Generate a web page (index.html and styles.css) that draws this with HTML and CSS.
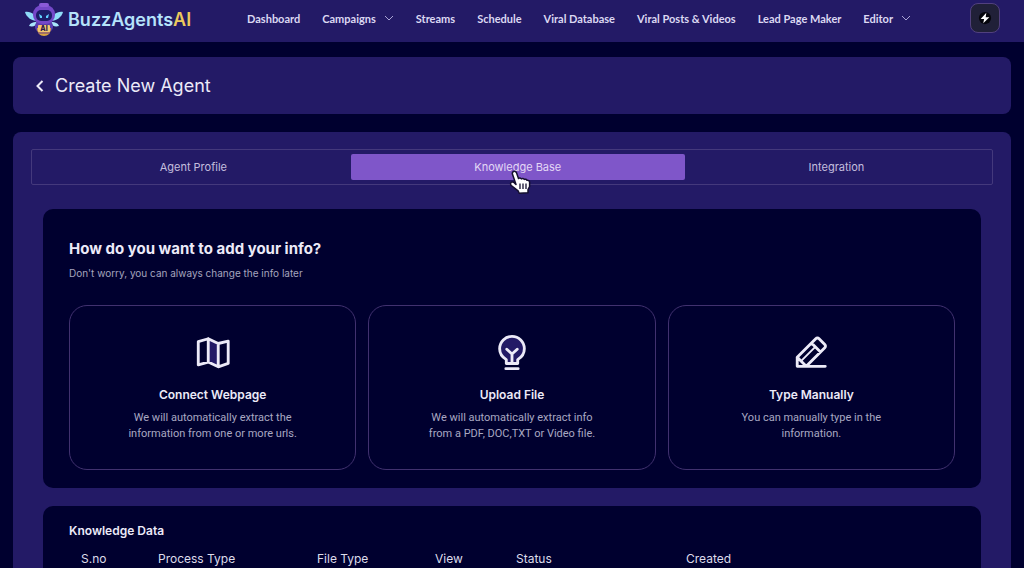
FILE: index.html
```
<!DOCTYPE html>
<html lang="en">
<head>
    <meta charset="UTF-8">
    <meta name="viewport" content="width=device-width, initial-scale=1.0">
    <title>BuzzAgentsAI - Create New Agent</title>
    <link rel="stylesheet" href="styles.css">
</head>
<body>
    <header class="navbar">
        <a class="logo" href="#">
            <svg class="logo-bot" viewBox="0 0 40 34" aria-hidden="true">
                <path d="M13 19C8 19 2 15 1 10c6-1 11 3 13 8z" fill="#8fdcf8"/>
                <path d="M27 19c5 0 11-4 12-9-6-1-11 3-13 8z" fill="#8fdcf8"/>
                <path d="M12 20c-3 0-6 1-7 4 4 1 7 0 8-3zM28 20c3 0 6 1 7 4-4 1-7 0-8-3z" fill="#a9e6fb"/>
                <rect x="11" y="19" width="18" height="11" rx="5" fill="#5a3bae"/>
                <path d="M13 26h14c0 5-3 8-7 8s-7-3-7-8z" fill="#d9a441"/>
                <path d="M14 31h12" stroke="#6a3d90"/>
                <rect x="9" y="3" width="22" height="19" rx="9" fill="#7448c8"/>
                <rect x="15" y="1" width="10" height="4" rx="2" fill="#8a5ad8"/>
                <rect x="12" y="8" width="16" height="11" rx="5" fill="#1d1c68"/>
                <path d="M15 12l3 2v2h-2zM25 12l-3 2v2h2z" fill="#5fd0ff"/>
                <rect x="14" y="23" width="12" height="7" rx="1" fill="#f3c872"/>
                <text class="logo-badge" x="20" y="29" text-anchor="middle">AI</text>
            </svg>
            <span class="logo-text">BuzzAgents<span class="logo-ai">AI</span></span>
        </a>
        <nav class="nav-links">
            <a href="#">Dashboard</a>
            <a href="#">Campaigns
                <svg class="chevron" viewBox="0 0 10 6" aria-hidden="true"><path d="M1 1l4 4 4-4"/></svg>
            </a>
            <a href="#">Streams</a>
            <a href="#">Schedule</a>
            <a href="#">Viral Database</a>
            <a href="#">Viral Posts &amp; Videos</a>
            <a href="#">Lead Page Maker</a>
            <a href="#">Editor
                <svg class="chevron" viewBox="0 0 10 6" aria-hidden="true"><path d="M1 1l4 4 4-4"/></svg>
            </a>
        </nav>
        <button class="bolt-button" type="button" aria-label="Quick actions">
            <svg viewBox="0 0 16 16" aria-hidden="true">
                <circle cx="8" cy="8" r="7" fill="#05050c"/>
                <path d="M9.500 2L3 9h4l-1 5 7-7H8.800z" fill="#fff"/>
            </svg>
        </button>
    </header>

    <main>
        <div class="page-title">
            <a class="back" href="#" aria-label="Back">
                <svg viewBox="0 0 8 12" aria-hidden="true"><path d="M6.500 1L1.500 6l5 5"/></svg>
            </a>
            <h1>Create New Agent</h1>
        </div>

        <div class="panel">
            <div class="tabs" role="tablist">
                <button class="tab" type="button" role="tab">Agent Profile</button>
                <button class="tab active" type="button" role="tab" aria-selected="true">Knowledge Base
                    <svg class="cursor" viewBox="0 0 22 24" aria-hidden="true">
                        <path d="M4.500 1.500c1.300-.6 2.600 0 3.100 1.400L9.500 8.500c.8-.8 2.200-.7 2.900.4.9-.7 2.300-.5 2.900.5.900-.5 2.200-.1 2.700.9 1.300-.3 2.600.6 2.600 2v4.200l-1.600 3v3.200l-8.800.6-1.100-2.500-6.800-5.300c-1.100-1-.9-2.800.3-3.400 1-.5 2-.1 3 1L7 14.500 3.500 4.300c-.4-1.200 0-2.300 1-2.800z" fill="#fff" stroke="#15102f" stroke-width="1.500" stroke-linejoin="round"/>
                        <path d="M11 13.500v5.500M14 13.500v5.500M17 13.500v5.500" stroke="#15102f" stroke-width="1.300"/>
                    </svg>
                </button>
                <button class="tab" type="button" role="tab">Integration</button>
            </div>

            <section class="box">
                <h2>How do you want to add your info?</h2>
                <p class="hint">Don't worry, you can always change the info later</p>
                <div class="options">
                    <button class="option" type="button">
                        <svg viewBox="0 0 40 40" aria-hidden="true">
                            <path d="M15 4.500l10.500 5v25L15 29.500z" fill="#231a66" stroke="none"/>
                            <path d="M4.500 8L15 5l10.500 5L36 7.500V31l-10.500 3.500L15 29.500l-10.500 3zM15 5v24.500M25.500 10v24.500"/>
                        </svg>
                        <strong>Connect Webpage</strong>
                        <span>We will automatically extract the<br>information from one or more urls.</span>
                    </button>
                    <button class="option" type="button">
                        <svg viewBox="0 0 40 40" aria-hidden="true">
                            <path d="M14 31v-4c-4-2.500-7-6.500-7-11.500a13 13 0 0 1 26 0c0 5-3 9-7 11.500v4z" fill="#231a66"/>
                            <path d="M20 31V21M14.500 16l5.500 5 5.500-5M13.500 36.500h13"/>
                        </svg>
                        <strong>Upload File</strong>
                        <span>We will automatically extract info<br>from a PDF, DOC,TXT or Video file.</span>
                    </button>
                    <button class="option" type="button">
                        <svg viewBox="0 0 40 40" aria-hidden="true">
                            <path d="M25 5c1-1 2.500-1 3.500 0l6 6c1 1 1 2.500 0 3.500L15 34H5.500v-9.500zM20.500 9.500l9.500 9.500M5.500 24.500L15 34M5.500 34H35"/>
                            <path d="M10 28l14.500-14.500" stroke-width="2"/>
                        </svg>
                        <strong>Type Manually</strong>
                        <span>You can manually type in the<br>information.</span>
                    </button>
                </div>
            </section>

            <section class="box">
                <h3>Knowledge Data</h3>
                <table class="data-table">
                    <thead>
                        <tr>
                            <th class="col-sno">S.no</th>
                            <th class="col-process">Process Type</th>
                            <th class="col-file">File Type</th>
                            <th class="col-view">View</th>
                            <th class="col-status">Status</th>
                            <th>Created</th>
                        </tr>
                    </thead>
                </table>
            </section>
        </div>
    </main>
</body>
</html>
```
FILE: styles.css
```
* {
    box-sizing: border-box;
}
body {
    margin: 0;
    height: 100vh;
    overflow: hidden;
    background: #00002f;
    color: #eceaf8;
    font-family: Inter, "Liberation Sans", sans-serif;
    font-size: 12px;
}
button {
    font-family: inherit;
    cursor: pointer;
}
a {
    color: inherit;
    text-decoration: none;
}
h1, h2, h3, p {
    margin: 0;
}
.navbar {
    display: flex;
    align-items: center;
    height: 42px;
    padding: 0 24px;
    background: #231a66;
}
.logo {
    display: flex;
    align-items: center;
    gap: 4px;
    padding-bottom: 4px;
}
.logo-bot {
    width: 40px;
    height: 34px;
}
.logo-badge {
    font-size: 7px;
    font-weight: 800;
    fill: #2a1a4a;
}
.logo-text {
    color: #b5e3fb;
    font-size: 18px;
    font-weight: 600;
}
.logo-ai {
    color: #ecc95c;
}
.nav-links {
    display: flex;
    align-items: center;
    gap: 22px;
    margin-left: auto;
    margin-right: 59px;
    padding-bottom: 6px;
    font-family: Lato, sans-serif;
    font-size: 11px;
    font-weight: 700;
    color: #dcd8f2;
}
.nav-links a {
    display: flex;
    align-items: center;
    gap: 8px;
    white-space: nowrap;
}
.chevron {
    width: 10px;
    height: 6px;
    fill: none;
    stroke: #aaa4d4;
}
.bolt-button {
    display: flex;
    align-items: center;
    justify-content: center;
    width: 30px;
    height: 30px;
    margin-bottom: 6px;
    padding: 0;
    background: #202038;
    border: 1px solid #51407f;
    border-radius: 8px;
}
.bolt-button svg {
    width: 14px;
    height: 14px;
}
main {
    padding: 15px 13px 0;
}
.page-title {
    display: flex;
    align-items: center;
    gap: 11px;
    height: 57px;
    padding: 0 23px;
    background: #231a66;
    border-radius: 8px;
}
.back svg {
    display: block;
    width: 8px;
    height: 12px;
    fill: none;
    stroke: #eceaf8;
    stroke-width: 2;
}
.page-title h1 {
    font-size: 18px;
    font-weight: 400;
}
.panel {
    margin-top: 18px;
    padding: 17px 18px;
    background: #231a66;
    border-radius: 8px;
}
.tabs {
    display: flex;
    padding: 4px;
    border: 1px solid #44397c;
    border-radius: 2px;
}
.tab {
    position: relative;
    flex: 1 1 auto;
    height: 26px;
    padding: 0;
    background: none;
    border: none;
    border-radius: 2px;
    color: #c3bede;
    font-size: 11px;
}
.tab.active {
    background: #7f56c9;
    color: #e3d8f6;
}
.cursor {
    position: absolute;
    left: 158px;
    top: 16px;
    width: 22px;
    height: 24px;
    z-index: 1;
}
.box {
    margin: 24px 12px 0;
    padding: 30px 26px 18px;
    background: #00002f;
    border-radius: 10px;
}
.box + .box {
    margin-top: 18px;
    padding-top: 16px;
}
.box h2 {
    font-size: 15px;
    line-height: 20px;
    font-weight: 700;
}
.box h3 {
    font-size: 12px;
    line-height: 18px;
    font-weight: 600;
}
.hint {
    margin-top: 6px;
    color: #a5a4be;
    font-size: 10px;
    line-height: 16px;
}
.options {
    display: grid;
    grid-template-columns: repeat(3, 1fr);
    gap: 12px;
    margin-top: 24px;
}
.option {
    display: flex;
    flex-direction: column;
    align-items: center;
    height: 165px;
    padding: 28px 12px 0;
    background: none;
    border: 1px solid #41316f;
    border-radius: 18px;
    color: #eceaf8;
}
.option svg {
    width: 38px;
    height: 38px;
    fill: none;
    stroke: #eceaf8;
    stroke-width: 3;
    stroke-linejoin: round;
    stroke-linecap: round;
}
.option strong {
    margin-top: 14px;
    font-size: 12px;
    line-height: 18px;
    font-weight: 600;
}
.option span {
    margin-top: 6px;
    color: #a9a8c2;
    font-family: Roboto, sans-serif;
    font-size: 11px;
    line-height: 16px;
}
.data-table {
    width: 100%;
    margin-top: 10px;
    border-collapse: collapse;
    table-layout: fixed;
}
.data-table th {
    padding: 0 12px;
    color: #dddcea;
    font-size: 12px;
    line-height: 18px;
    font-weight: 400;
    text-align: left;
}
.col-sno {
    width: 77px;
}
.col-process {
    width: 159px;
}
.col-file {
    width: 118px;
}
.col-view {
    width: 81px;
}
.col-status {
    width: 170px;
}
```
